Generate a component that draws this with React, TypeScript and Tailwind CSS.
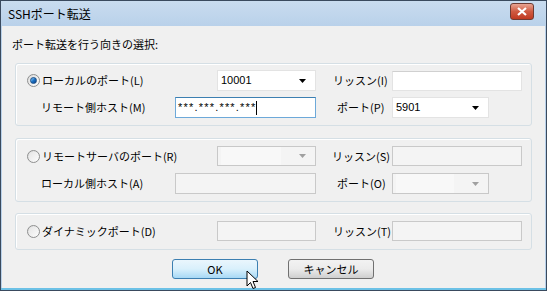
import React from "react";

const font = { fontFamily: '"Noto Sans CJK JP", "Noto Sans", sans-serif' };

function Radio({ checked }: { checked?: boolean }) {
  return (
    <span className="relative inline-flex h-[13px] w-[13px] shrink-0 items-center justify-center rounded-full border border-[#8e8f8f] bg-gradient-to-br from-[#dcdcdc] to-[#ffffff]">
      {checked ? (
        <span className="h-[7px] w-[7px] rounded-full bg-gradient-to-br from-[#8cd0ff] via-[#1c73c4] to-[#0a3f8c] border border-[#1a4d86]" />
      ) : (
        <span className="h-[9px] w-[9px] rounded-full bg-gradient-to-br from-[#e6e6e6] to-[#fafafa]" />
      )}
    </span>
  );
}

function Combo({ value, w, h, disabled }: { value?: string; w: string; h: string; disabled?: boolean }) {
  return (
    <div
      className={`${w} ${h} flex shrink-0 items-center justify-between border ${
        disabled ? "border-[#c8c8c8] bg-[#f4f4f4]" : "border-[#e3e3e3] bg-white"
      } pl-[3px] pr-[9px]`}
    >
      {disabled ? (
        <span className="h-full w-[70%] bg-[#f8f8f8]" />
      ) : (
        <span className="text-[11px] leading-none" style={{ fontFamily: '"Liberation Sans", sans-serif' }}>
          {value}
        </span>
      )}
      <svg width="7" height="4" viewBox="0 0 7 4">
        <path d="M0 0H7L3.5 4Z" fill={disabled ? "#a0a0a0" : "#000"} />
      </svg>
    </div>
  );
}

function Input({ w, h, disabled, focused, value }: { w: string; h: string; disabled?: boolean; focused?: boolean; value?: string }) {
  return (
    <div
      className={`${w} ${h} flex shrink-0 items-center border ${
        disabled
          ? "border-[#c9c9c9] bg-[#f4f4f4]"
          : focused
          ? "border-[#6da9d9] border-t-[#3c7fb1] bg-white"
          : "border-[#e3e3e3] border-t-[#d0d0d0] bg-white"
      } px-[2px]`}
    >
      {value && (
        <span className="flex items-center">
          <span className="text-[11px] leading-none tracking-[1.2px]" style={{ fontFamily: '"Liberation Sans", sans-serif' }}>
            {value}
          </span>
          <span className="ml-[-1px] h-[14px] w-[1px] bg-black" />
        </span>
      )}
    </div>
  );
}

function Group({ children, className }: { children: React.ReactNode; className: string }) {
  return (
    <div className={`ml-[13px] w-[517px] rounded-[3px] border border-[#d5dfe5] shadow-[inset_1px_1px_0_#ffffff] ${className}`}>
      {children}
    </div>
  );
}

export default function App() {
  return (
    <div className="h-[291px] w-[547px] bg-[#f0f0f0] text-black" style={font}>
      <div className="flex h-[291px] w-[547px] flex-col border border-[#3a4a5e] bg-[#f0f0f0]">
        {/* Title bar */}
        <div className="flex h-[25px] shrink-0 items-center justify-between bg-gradient-to-b from-[#c9dcef] to-[#b9d1ea] pl-[7px] pr-[12px]">
          <span className="text-[12px] leading-none">SSHポート転送</span>
          <div className="mt-[-4px] flex h-[17px] w-[24px] items-center justify-center rounded-[3px] border border-[#6e3b33] bg-gradient-to-b from-[#e8a493] via-[#cf5a41] to-[#c0391f]">
            <svg width="10" height="9" viewBox="0 0 10 9">
              <path d="M1 1L9 8M9 1L1 8" stroke="#ffffff" strokeWidth="2.2" />
            </svg>
          </div>
        </div>
        {/* Client */}
        <div className="flex flex-1 flex-col whitespace-nowrap border-x border-[#b9d1ea] bg-[#f0f0f0] text-[11px] leading-none">
          <div className="pl-[10px] pt-[13px]">ポート転送を行う向きの選択:</div>

          {/* Group 1 */}
          <Group className="mt-[13px] h-[63px] pt-[6px]">
            <div className="flex h-[21px] items-center">
              <div className="flex w-[201px] shrink-0 items-center pl-[11px]">
                <Radio checked />
                <span className="ml-[2px]">ローカルのポート(L)</span>
              </div>
              <Combo value="10001" w="w-[99px]" h="h-[21px]" />
              <div className="ml-[17px] w-[59px] shrink-0">リッスン(I)</div>
              <Input w="w-[130px]" h="h-[20px]" />
            </div>
            <div className="mt-[6px] flex h-[21px] items-center">
              <div className="w-[159px] shrink-0 pl-[25px]">リモート側ホスト(M)</div>
              <Input w="w-[141px]" h="h-[21px]" focused value="***.***.***.***" />
              <div className="ml-[21px] w-[55px] shrink-0">ポート(P)</div>
              <Combo value="5901" w="w-[97px]" h="h-[21px]" />
            </div>
          </Group>

          {/* Group 2 */}
          <Group className="mt-[12px] h-[64px] pt-[7px]">
            <div className="flex h-[20px] items-center">
              <div className="flex w-[201px] shrink-0 items-center pl-[11px]">
                <Radio />
                <span className="ml-[2px]">リモートサーバのポート(R)</span>
              </div>
              <Combo disabled w="w-[99px]" h="h-[20px]" />
              <div className="ml-[16px] w-[60px] shrink-0">リッスン(S)</div>
              <Input disabled w="w-[130px]" h="h-[20px]" />
            </div>
            <div className="mt-[7px] flex h-[21px] items-center">
              <div className="w-[159px] shrink-0 pl-[25px]">ローカル側ホスト(A)</div>
              <Input disabled w="w-[141px]" h="h-[21px]" />
              <div className="ml-[21px] w-[55px] shrink-0">ポート(O)</div>
              <Combo disabled w="w-[97px]" h="h-[21px]" />
            </div>
          </Group>

          {/* Group 3 */}
          <Group className="mt-[11px] h-[37px] pt-[7px]">
            <div className="flex h-[20px] items-center">
              <div className="flex w-[201px] shrink-0 items-center pl-[11px]">
                <Radio />
                <span className="ml-[2px]">ダイナミックポート(D)</span>
              </div>
              <Input disabled w="w-[99px]" h="h-[20px]" />
              <div className="ml-[17px] w-[59px] shrink-0">リッスン(T)</div>
              <Input disabled w="w-[130px]" h="h-[20px]" />
            </div>
          </Group>

          {/* Buttons */}
          <div className="mt-[9px] flex pl-[170px]">
            <div className="relative flex h-[20px] w-[86px] items-center justify-center rounded-[3px] border border-[#3c7fb1] bg-gradient-to-b from-[#eaf6fd] via-[#d9f0fc] to-[#a7d9f5]">
              OK
              <svg className="absolute left-[73px] top-[10px]" width="13" height="20" viewBox="0 0 13 20">
                <path d="M1 1V16L4.5 12.5L7 18.5L9.5 17.5L7 11.5H12Z" fill="#fff" stroke="#000" strokeWidth="1" strokeLinejoin="round" />
              </svg>
            </div>
            <div className="ml-[30px] flex h-[20px] w-[86px] items-center justify-center rounded-[3px] border border-[#707070] bg-gradient-to-b from-[#f2f2f2] via-[#ebebeb] to-[#cfcfcf]">
              キャンセル
            </div>
          </div>
          <div className="flex-1" />
        </div>
        <div className="h-[2px] shrink-0 bg-[#6cc1e6]" />
      </div>
    </div>
  );
}
